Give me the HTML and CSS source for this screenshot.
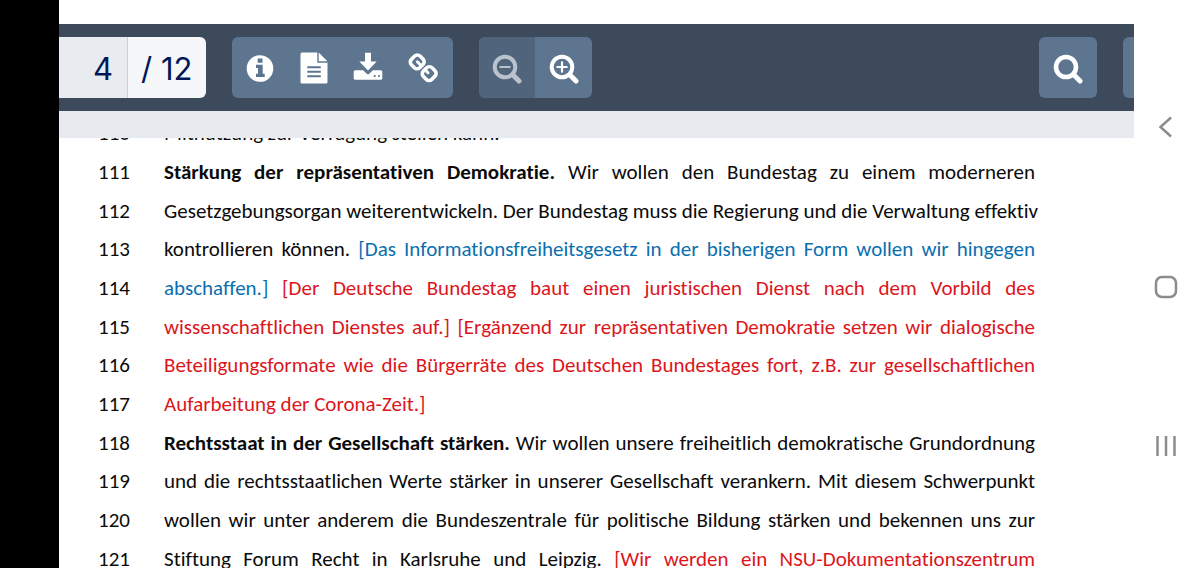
FILE: index.html
```
<!DOCTYPE html>
<html lang="de">
<head>
<meta charset="utf-8">
<meta name="viewport" content="width=device-width, initial-scale=1">
<title>Dokument</title>
<link rel="stylesheet" href="styles.css">
</head>
<body>
<div class="screen">
  <main class="viewer">
    <header class="toolbar">
      <div class="pager">
        <input class="pager-input" type="text" value="4" aria-label="Seite">
        <span class="pager-total">/ 12</span>
      </div>
      <div class="group group-main">
        <button class="tool" type="button" aria-label="Information">
          <svg class="icon" viewBox="0 0 32 32"><circle cx="16" cy="16.500" r="13.3" fill="currentColor"/><path class="cut" d="M13.700 6.500h4.800v4.200h-4.800zM12 12.800h6.700v9h2v3.200H12v-3.200h2v-5.800h-2z"/></svg>
        </button>
        <button class="tool" type="button" aria-label="Text">
          <svg class="icon" viewBox="0 0 32 32"><path fill="currentColor" d="M4 .5h15.300v10.200h10.200V30a1.500 1.500 0 0 1-1.500 1.500H4A1.500 1.500 0 0 1 2.500 30V2A1.500 1.500 0 0 1 4 .5zM20.700.6l8.700 8.700h-8.700z"/><path class="cut-line" d="M9.300 15.300h13.500M9.300 19.800h13.500M9.300 24.300h13.500"/></svg>
        </button>
        <button class="tool" type="button" aria-label="Herunterladen">
          <svg class="icon" viewBox="0 0 32 32"><path fill="currentColor" d="M13 .8h6v8.700h5.700L16 18.500 7.300 9.500H13z"/><path fill="currentColor" d="M3.200 18.300h8l3.200 3.100a2.300 2.300 0 0 0 3.200 0l3.200-3.100h8a1.500 1.500 0 0 1 1.500 1.500v6.500a1.500 1.500 0 0 1-1.500 1.500H3.200a1.500 1.500 0 0 1-1.500-1.500v-6.500a1.500 1.500 0 0 1 1.500-1.500z"/><circle class="cut" cx="22.700" cy="24" r="1.100"/><circle class="cut" cx="27" cy="24" r="1.100"/></svg>
        </button>
        <button class="tool" type="button" aria-label="Link kopieren">
          <svg class="icon" viewBox="0 0 32 32"><g fill="none" stroke="currentColor" stroke-width="3.600"><rect x="5.300" y="3.800" width="11.800" height="12.200" rx="3.800" transform="rotate(45 11.200 9.900)"/><rect x="17.300" y="15.500" width="11.800" height="12.200" rx="3.800" transform="rotate(45 23.200 21.600)"/><path stroke-linecap="round" stroke-width="3" d="M11.300 9.800l3 3M19.600 18.300l2.400 2.400"/></g></svg>
        </button>
      </div>
      <div class="group">
        <button class="tool" type="button" aria-label="Verkleinern" disabled>
          <svg class="icon" viewBox="0 0 32 32"><g fill="none" stroke="currentColor" stroke-linecap="round"><circle cx="14" cy="15" r="10.300" stroke-width="4"/><path stroke-width="5" d="M22.700 23.700l5.300 5.300"/><path stroke-width="2.200" d="M9.300 15h9.400"/></g></svg>
        </button>
        <button class="tool" type="button" aria-label="Vergrößern">
          <svg class="icon" viewBox="0 0 32 32"><g fill="none" stroke="currentColor" stroke-linecap="round"><circle cx="14" cy="15" r="10.300" stroke-width="4"/><path stroke-width="5" d="M22.700 23.700l5.300 5.300"/><path stroke-width="2.200" d="M9.300 15h9.400M14 10.300v9.400"/></g></svg>
        </button>
      </div>
      <div class="group group-end">
        <button class="tool" type="button" aria-label="Suchen">
          <svg class="icon" viewBox="0 0 32 32"><g fill="none" stroke="currentColor" stroke-linecap="round"><circle cx="14" cy="15" r="10" stroke-width="4.600"/><path stroke-width="5" d="M22.500 23.500l5.500 5.500"/></g></svg>
        </button>
      </div>
      <div class="group group-cut">
        <button class="tool" type="button" aria-label="Mehr"></button>
      </div>
    </header>
    <div class="backdrop"></div>
    <article class="page">
      <ol class="lines">
        <li class="line"><span class="num">110</span><span class="text ragged">Mitnutzung zur Verfügung stellen kann.</span></li>
        <li class="line"><span class="num">111</span><span class="text"><b>Stärkung der repräsentativen Demokratie.</b> Wir wollen den Bundestag zu einem moderneren</span></li>
        <li class="line"><span class="num">112</span><span class="text">Gesetzgebungsorgan weiterentwickeln. Der Bundestag muss die Regierung und die Verwaltung effektiv</span></li>
        <li class="line"><span class="num">113</span><span class="text">kontrollieren können. <span class="blue">[Das Informationsfreiheitsgesetz in der bisherigen Form wollen wir hingegen</span></span></li>
        <li class="line"><span class="num">114</span><span class="text"><span class="blue">abschaffen.]</span> <span class="red">[Der Deutsche Bundestag baut einen juristischen Dienst nach dem Vorbild des</span></span></li>
        <li class="line"><span class="num">115</span><span class="text red">wissenschaftlichen Dienstes auf.] [Ergänzend zur repräsentativen Demokratie setzen wir dialogische</span></li>
        <li class="line"><span class="num">116</span><span class="text red">Beteiligungsformate wie die Bürgerräte des Deutschen Bundestages fort, z.B. zur gesellschaftlichen</span></li>
        <li class="line"><span class="num">117</span><span class="text ragged red">Aufarbeitung der Corona-Zeit.]</span></li>
        <li class="line"><span class="num">118</span><span class="text"><b>Rechtsstaat in der Gesellschaft stärken.</b> Wir wollen unsere freiheitlich demokratische Grundordnung</span></li>
        <li class="line"><span class="num">119</span><span class="text">und die rechtsstaatlichen Werte stärker in unserer Gesellschaft verankern. Mit diesem Schwerpunkt</span></li>
        <li class="line"><span class="num">120</span><span class="text">wollen wir unter anderem die Bundeszentrale für politische Bildung stärken und bekennen uns zur</span></li>
        <li class="line"><span class="num">121</span><span class="text">Stiftung Forum Recht in Karlsruhe und Leipzig. <span class="red">[Wir werden ein NSU-Dokumentationszentrum</span></span></li>
      </ol>
    </article>
  </main>
  <nav class="rail" aria-label="Systemnavigation">
    <button class="rail-button" type="button" aria-label="Zurück"><svg class="rail-icon" viewBox="0 0 24 24"><path d="M17 2.500 6.500 12 17 21.500"/></svg></button>
    <button class="rail-button" type="button" aria-label="Startbildschirm"><svg class="rail-icon" viewBox="0 0 24 24"><rect x="2" y="2" width="20" height="20" rx="6"/></svg></button>
    <button class="rail-button" type="button" aria-label="Letzte Apps"><svg class="rail-icon" viewBox="0 0 24 24"><path d="M3.500 2v20M12 2v20M20.500 2v20"/></svg></button>
  </nav>
</div>
</body>
</html>
```
FILE: styles.css
```
* { box-sizing: border-box; }

body {
  margin: 0;
  background: #fff;
  font-family: Carlito, Calibri, Lato, sans-serif;
}

.screen {
  display: flex;
  height: 100vh;
  overflow: hidden;
  border-left: 59px solid #000;
}

.viewer {
  flex: 1;
  min-width: 0;
  display: flex;
  flex-direction: column;
  padding-top: 24px;
}

.toolbar {
  display: flex;
  gap: 26px;
  padding: 13px 0;
  overflow: hidden;
  background: #3c4a5b;
}

.pager {
  display: flex;
  height: 61px;
  border-radius: 0 6px 6px 0;
  overflow: hidden;
  background: #f5f7f9;
  color: #00175a;
  font: 31px Inter, sans-serif;
}

.pager-input {
  width: 69px;
  padding: 2px 14px 0 0;
  border: 0;
  border-right: 1px solid #c9d0da;
  border-radius: 0;
  background: #e8ebf0;
  color: inherit;
  font: inherit;
  text-align: right;
}

.pager-total {
  padding: 1px 14px 0 13px;
  line-height: 61px;
  white-space: nowrap;
}

.group {
  display: flex;
  flex: none;
  height: 61px;
  border-radius: 6px;
  overflow: hidden;
  background: #5e758f;
}

.group-main { padding: 0 4px 0 1px; }

.group-end { margin-left: auto; }

.group-cut {
  width: 11px;
  border-radius: 6px 0 0 6px;
}

.tool {
  display: flex;
  align-items: center;
  justify-content: center;
  width: 54px;
  padding: 0;
  border: 0;
  background: transparent;
  color: #fff;
}

.tool:only-child { width: 58px; }

.tool:disabled {
  width: 56px;
  background: #50647b;
  color: #bac3cd;
}

.tool:disabled + .tool { width: 57px; }

.icon {
  width: 32px;
  height: 32px;
}

.cut { fill: #5e758f; }

.cut-line {
  stroke: #5e758f;
  stroke-width: 2;
}

.backdrop {
  position: relative;
  z-index: 1;
  flex: none;
  height: 27px;
  background: #e7eaef;
}

.page {
  flex: 1;
  display: flex;
  min-height: 0;
  padding: 0 99px 0 39px;
  font-size: 21px;
  font-variant-ligatures: none;
  color: #0b0b0b;
}

/* The first line slides under the backdrop, the last one past the window edge. */
.lines {
  flex: 1;
  min-width: 0;
  display: grid;
  grid-template-columns: minmax(0, 1fr);
  grid-auto-rows: 1fr;
  margin: -24px 0 -10px;
  padding: 0;
  list-style: none;
}

.line {
  display: flex;
  align-items: center;
}

.num {
  flex: none;
  width: 66px;
}

.text {
  flex: 1;
  min-width: 0;
  text-align: justify;
  text-align-last: justify;
  white-space: nowrap;
}

.ragged { text-align-last: left; }

.blue { color: #0b6fae; }

.red { color: #dc161c; }

.rail {
  flex: none;
  display: flex;
  flex-direction: column;
  justify-content: space-between;
  width: 66px;
  padding: 112px 0 107px;
}

.rail-button {
  display: flex;
  justify-content: center;
  padding: 3px 2px 3px 0;
  border: 0;
  background: transparent;
}

.rail-icon {
  width: 24px;
  height: 24px;
  fill: none;
  stroke: #8c8c8c;
  stroke-width: 2.500;
}
```
